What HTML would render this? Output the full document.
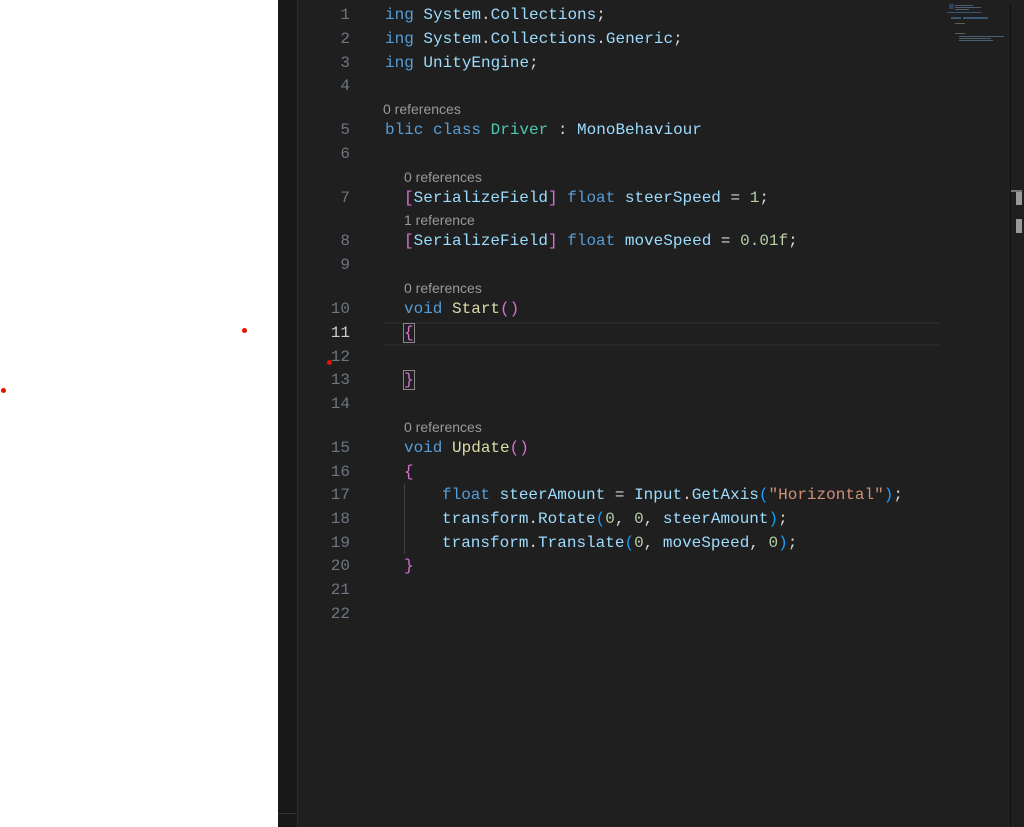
<!DOCTYPE html>
<html><head><meta charset="utf-8"><style>
body{margin:0;width:1024px;height:827px;overflow:hidden;background:#fff;position:relative;font-family:"Liberation Mono",monospace;}
#strip{position:absolute;left:278px;top:0;width:19px;height:827px;background:#181818;border-right:1px solid #2b2b2b;}
#strip2{position:absolute;left:278px;top:813px;width:19px;height:1px;background:#333;}
#ed{position:absolute;left:298px;top:0;width:726px;height:827px;background:#1f1f1f;}
.l{position:absolute;left:0;height:24px;line-height:24px;font-size:16px;white-space:pre;color:#d4d4d4;}
.n{position:absolute;width:52px;text-align:right;left:0;height:24px;line-height:24px;font-size:16px;color:#6e7681;font-family:"Liberation Mono",monospace;}
.c{position:absolute;left:0;font-family:"Liberation Sans",sans-serif;font-size:14px;color:#999;height:20px;line-height:20px;white-space:pre;}
.k{color:#569cd6}.t{color:#4ec9b0}.v{color:#9cdcfe}.f{color:#dcdcaa}.m{color:#b5cea8}.s{color:#ce9178}
.y{color:#ffd700}.p{color:#da70d6}.b{color:#179fff}
.dot{position:absolute;width:5px;height:5px;border-radius:50%;background:#e51400;}
.mm{position:absolute;height:1px;opacity:.6}
</style></head><body>
<div id="strip"></div><div id="strip2"></div>
<div class="dot" style="left:242px;top:328px"></div>
<div class="dot" style="left:1px;top:388px"></div>
<div id="ed">
<div style="position:absolute;left:86px;top:322px;width:556px;height:20px;border-top:2px solid #282828;border-bottom:2px solid #282828;"></div>
<div style="position:absolute;left:106px;top:484px;width:1px;height:70px;background:#404040"></div>
<div style="position:absolute;left:712px;top:4px;width:1px;height:823px;background:#111"></div>
<div style="position:absolute;left:713px;top:190px;width:11px;height:2px;background:#777"></div>
<div style="position:absolute;left:718px;top:192px;width:6px;height:13px;background:#999"></div>
<div style="position:absolute;left:718px;top:219px;width:6px;height:14px;background:#999"></div>
<!-- minimap -->
<div class="mm" style="left:651px;top:4px;width:5px;height:5px;background:#2f5a8a"></div>
<div class="mm" style="left:657px;top:5px;width:18px;background:#6a8aa8"></div>
<div class="mm" style="left:657px;top:7px;width:26px;background:#6a8aa8"></div>
<div class="mm" style="left:657px;top:9px;width:14px;background:#6a8aa8"></div>
<div class="mm" style="left:649px;top:12px;width:35px;background:#4a7aa8"></div>
<div class="mm" style="left:653px;top:17px;width:10px;height:2px;background:#4a7aa8"></div>
<div class="mm" style="left:665px;top:17px;width:25px;height:2px;background:#4a7aa8"></div>
<div class="mm" style="left:657px;top:23px;width:10px;background:#8a8a6a"></div>
<div class="mm" style="left:657px;top:33px;width:10px;background:#8a8a6a"></div>
<div class="mm" style="left:661px;top:36px;width:45px;background:#6a8aa8"></div>
<div class="mm" style="left:661px;top:38px;width:32px;background:#6a8aa8"></div>
<div class="mm" style="left:661px;top:40px;width:34px;background:#6a8aa8"></div>
</div>
<div id="wrap" style="position:absolute;left:298px;top:0;">
<div class="n" style="top:3px">1</div><div class="l" style="left:87px;top:3px"><span class="k">ing</span> <span class="v">System</span>.<span class="v">Collections</span>;</div>
<div class="n" style="top:27px">2</div><div class="l" style="left:87px;top:27px"><span class="k">ing</span> <span class="v">System</span>.<span class="v">Collections</span>.<span class="v">Generic</span>;</div>
<div class="n" style="top:51px">3</div><div class="l" style="left:87px;top:51px"><span class="k">ing</span> <span class="v">UnityEngine</span>;</div>
<div class="n" style="top:74px">4</div>
<div class="c" style="left:85px;top:99px">0 references</div>
<div class="n" style="top:118px">5</div><div class="l" style="left:87px;top:118px"><span class="k">blic class</span> <span class="t">Driver</span> : <span class="v">MonoBehaviour</span></div>
<div class="n" style="top:142px">6</div>
<div class="c" style="left:106px;top:167px">0 references</div>
<div class="n" style="top:186px">7</div><div class="l" style="left:106px;top:186px"><span class="p">[</span><span class="v">SerializeField</span><span class="p">]</span> <span class="k">float</span> <span class="v">steerSpeed</span> = <span class="m">1</span>;</div>
<div class="c" style="left:106px;top:210px">1 reference</div>
<div class="n" style="top:229px">8</div><div class="l" style="left:106px;top:229px"><span class="p">[</span><span class="v">SerializeField</span><span class="p">]</span> <span class="k">float</span> <span class="v">moveSpeed</span> = <span class="m">0.01f</span>;</div>
<div class="n" style="top:253px">9</div>
<div class="c" style="left:106px;top:278px">0 references</div>
<div class="n" style="top:297px">10</div><div class="l" style="left:106px;top:297px"><span class="k">void</span> <span class="f">Start</span><span class="p">()</span></div>
<div class="n" style="top:321px;color:#ccc">11</div><div class="l" style="left:106px;top:321px"><span class="p" style="outline:1px solid #888">{</span></div>
<div class="n" style="top:345px">12</div>
<div class="dot" style="left:29px;top:360px"></div>
<div class="n" style="top:368px">13</div><div class="l" style="left:106px;top:368px"><span class="p" style="outline:1px solid #888">}</span></div>
<div class="n" style="top:392px">14</div>
<div class="c" style="left:106px;top:417px">0 references</div>
<div class="n" style="top:436px">15</div><div class="l" style="left:106px;top:436px"><span class="k">void</span> <span class="f">Update</span><span class="p">()</span></div>
<div class="n" style="top:460px">16</div><div class="l" style="left:106px;top:460px"><span class="p">{</span></div>
<div class="n" style="top:483px">17</div><div class="l" style="left:144px;top:483px"><span class="k">float</span> <span class="v">steerAmount</span> = <span class="v">Input</span>.<span class="v">GetAxis</span><span class="b">(</span><span class="s">"Horizontal"</span><span class="b">)</span>;</div>
<div class="n" style="top:507px">18</div><div class="l" style="left:144px;top:507px"><span class="v">transform</span>.<span class="v">Rotate</span><span class="b">(</span><span class="m">0</span>, <span class="m">0</span>, <span class="v">steerAmount</span><span class="b">)</span>;</div>
<div class="n" style="top:531px">19</div><div class="l" style="left:144px;top:531px"><span class="v">transform</span>.<span class="v">Translate</span><span class="b">(</span><span class="m">0</span>, <span class="v">moveSpeed</span>, <span class="m">0</span><span class="b">)</span>;</div>
<div class="n" style="top:554px">20</div><div class="l" style="left:106px;top:554px"><span class="p">}</span></div>
<div class="n" style="top:578px">21</div>
<div class="n" style="top:602px">22</div>
</div>
</body></html>
